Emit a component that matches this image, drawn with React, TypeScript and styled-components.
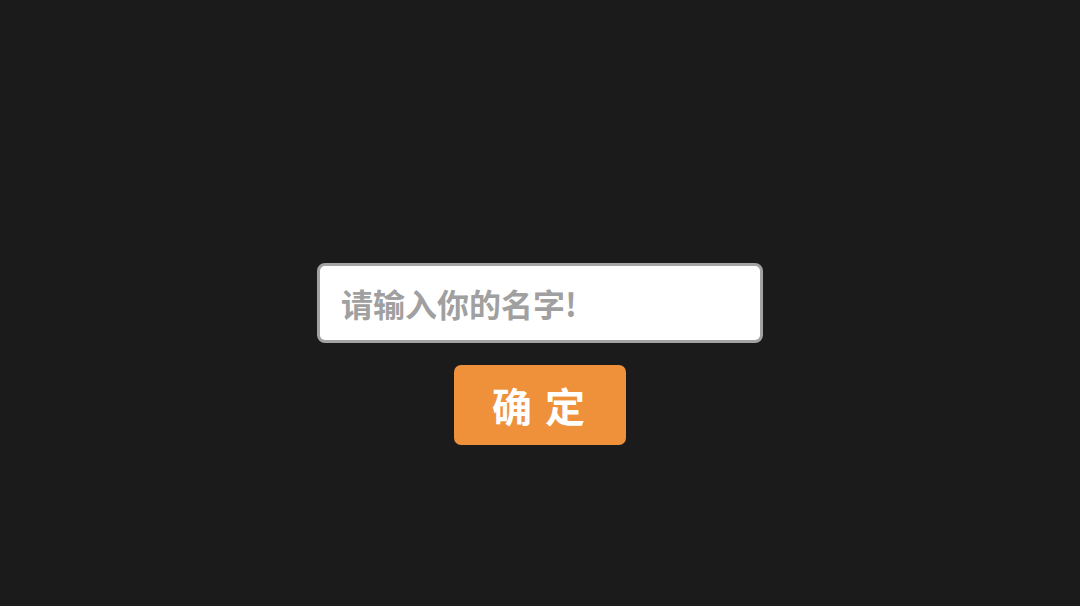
import styled, { createGlobalStyle } from "styled-components";

const GlobalStyle = createGlobalStyle`
  html, body {
    margin: 0;
    padding: 0;
    background: #1b1b1b;
  }
  body {
    font-family: "Noto Sans CJK SC", "Noto Sans", sans-serif;
  }
`;

export default function App() {
  return (
    <>
      <GlobalStyle />
      <Page>
        <NameInput type="text" placeholder="请输入你的名字!" />
        <ConfirmButton type="button">确 定</ConfirmButton>
      </Page>
    </>
  );
}

const Page = styled.div`
  width: 100%;
  height: 100vh;
  box-sizing: border-box;
  display: flex;
  flex-direction: column;
  align-items: center;
  padding-top: 263px;
  gap: 22px;
`;

const NameInput = styled.input`
  width: 446px;
  height: 80px;
  box-sizing: border-box;
  padding: 0 21px;
  border: 3px solid #a3a3a3;
  border-radius: 8px;
  background: #ffffff;
  font-family: "Noto Sans CJK SC", sans-serif;
  font-size: 32px;
  font-weight: 700;
  color: #333;
  outline: none;

  &::placeholder {
    color: #a0a0a0;
  }
`;

const ConfirmButton = styled.button`
  width: 172px;
  height: 80px;
  margin-right: 1px;
  border: none;
  border-radius: 7px;
  background: #ee913a;
  color: #ffffff;
  font-family: "Noto Sans CJK SC", sans-serif;
  font-size: 40px;
  font-weight: 700;
  letter-spacing: 2px;
  cursor: pointer;
`;
